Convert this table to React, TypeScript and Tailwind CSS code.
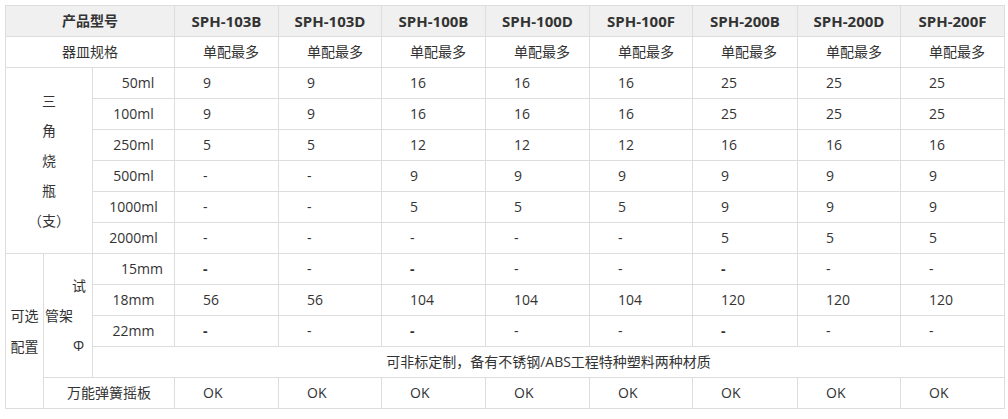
import React from "react";

const MODELS = ["SPH-103B", "SPH-103D", "SPH-100B", "SPH-100D", "SPH-100F", "SPH-200B", "SPH-200D", "SPH-200F"];

const FLASKS = [
  { size: "50ml", pad: "pl-[9px]", vals: ["9", "9", "16", "16", "16", "25", "25", "25"] },
  { size: "100ml", pad: "", vals: ["9", "9", "16", "16", "16", "25", "25", "25"] },
  { size: "250ml", pad: "", vals: ["5", "5", "12", "12", "12", "16", "16", "16"] },
  { size: "500ml", pad: "", vals: ["-", "-", "9", "9", "9", "9", "9", "9"] },
  { size: "1000ml", pad: "", vals: ["-", "-", "5", "5", "5", "9", "9", "9"] },
  { size: "2000ml", pad: "", vals: ["-", "-", "-", "-", "-", "5", "5", "5"] },
];

// bold dashes sit in the B columns of the tube rows
const TUBES = [
  { size: "15mm", pad: "pl-[17px]", vals: ["*", "-", "*", "-", "-", "*", "-", "-"] },
  { size: "18mm", pad: "", vals: ["56", "56", "104", "104", "104", "120", "120", "120"] },
  { size: "22mm", pad: "", vals: ["*", "-", "*", "-", "-", "*", "-", "-"] },
];

const cell = "border border-[#dddddd] p-0";
const data = `${cell} pl-[28px] text-left`;

function Val({ v }: { v: string }) {
  if (v === "*") return <span className="font-bold">-</span>;
  return <>{v}</>;
}

export default function App() {
  return (
    <div className="bg-white w-[1008px] h-[419px] pt-[5px] pl-[5px]" style={{ fontFamily: '"Open Sans", "Noto Sans CJK SC", sans-serif' }}>
      <table className="table-fixed border-collapse w-[1000px] text-[14px] text-[#333333] leading-[20px]">
        <colgroup>
          <col className="w-[38px]" />
          <col className="w-[49px]" />
          <col className="w-[82px]" />
          <col className="w-[104px]" />
          <col className="w-[103px]" />
          <col className="w-[104px]" />
          <col className="w-[104px]" />
          <col className="w-[103px]" />
          <col className="w-[105px]" />
          <col className="w-[103px]" />
          <col className="w-[104px]" />
        </colgroup>
        <thead>
          <tr className="h-[31px] bg-[#f0f0f0]">
            <th colSpan={3} className={`${cell} font-bold text-center`}>产品型号</th>
            {MODELS.map((m) => (
              <th key={m} className={`${cell} font-bold text-center text-[15px]`}>{m}</th>
            ))}
          </tr>
        </thead>
        <tbody>
          <tr className="h-[31px]">
            <td colSpan={3} className={`${cell} text-center`}>器皿规格</td>
            {MODELS.map((m) => (
              <td key={m} className={data}>单配最多</td>
            ))}
          </tr>

          {FLASKS.map((row, i) => (
            <tr key={row.size} className="h-[31px]">
              {i === 0 && (
                <td rowSpan={6} colSpan={2} className={`${cell} text-center leading-[30px]`}>
                  <div>三</div>
                  <div>角</div>
                  <div>烧</div>
                  <div>瓶</div>
                  <div>（支）</div>
                </td>
              )}
              <td className={`${cell} text-center ${row.pad}`}>{row.size}</td>
              {row.vals.map((v, j) => (
                <td key={j} className={data}>{v}</td>
              ))}
            </tr>
          ))}

          {TUBES.map((row, i) => (
            <tr key={row.size} className="h-[31px]">
              {i === 0 && (
                <>
                  <td rowSpan={5} className={`${cell} text-center leading-[31px]`}>
                    <div>可选</div>
                    <div>配置</div>
                  </td>
                  <td rowSpan={4} className={`${cell} text-left leading-[30px]`}>
                    <div className="pl-[28px]">试</div>
                    <div className="pl-px">管架</div>
                    <div className="pl-[29px]">Φ</div>
                  </td>
                </>
              )}
              <td className={`${cell} text-center ${row.pad}`}>{row.size}</td>
              {row.vals.map((v, j) => (
                <td key={j} className={data}>
                  <Val v={v} />
                </td>
              ))}
            </tr>
          ))}

          <tr className="h-[31px]">
            <td colSpan={9} className={`${cell} text-center`}>可非标定制，备有不锈钢/ABS工程特种塑料两种材质</td>
          </tr>

          <tr className="h-[31px]">
            <td colSpan={2} className={`${cell} text-center`}>万能弹簧摇板</td>
            {MODELS.map((m) => (
              <td key={m} className={data}>OK</td>
            ))}
          </tr>
        </tbody>
      </table>
    </div>
  );
}
